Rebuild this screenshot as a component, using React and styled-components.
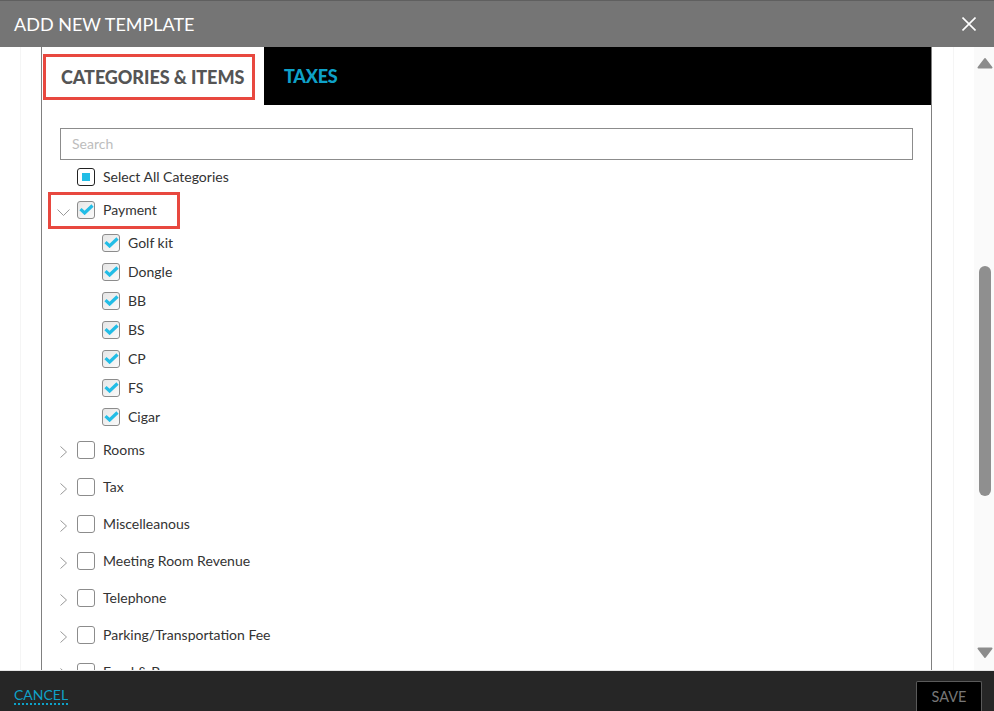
import React from "react";
import styled, { createGlobalStyle } from "styled-components";

const Global = createGlobalStyle`
  html, body { margin: 0; padding: 0; height: 100%; background: #fff; overflow: hidden; }
  #root { height: 100%; }
  * { box-sizing: border-box; }
`;

const Page = styled.div`
  width: 994px; height: 711px; display: flex; flex-direction: column;
  font-family: Lato, "Open Sans", sans-serif; color: #333; overflow: hidden;
`;
const Header = styled.header`
  height: 47px; flex: none; background: #757575; border-top: 1px solid #5f5f5f;
  display: flex; align-items: center; justify-content: space-between; padding: 0 18px 0 14px;
`;
const Title = styled.h1`
  margin: 0; font-size: 18px; font-weight: 400; color: #fff; line-height: 46px; letter-spacing: 0;
`;
const Main = styled.div`
  flex: 1; min-height: 0; display: flex; background: #fff;
`;
const LeftGutter = styled.div`
  width: 41px; flex: none; padding-left: 20px;
  &::before { content: ""; display: block; width: 1px; height: 100%; background: #f5f5f5; }
`;
const Panel = styled.section`
  width: 891px; flex: none; border-left: 1px solid #808080; border-right: 1px solid #808080;
  overflow: hidden;
`;
const Tabs = styled.div`
  height: 58px; background: #000; display: flex;
`;
const ActiveTab = styled.div`
  width: 222px; background: #fff; padding: 7px 9px 5px 1px;
`;
const TabMark = styled.div`
  height: 46px; border: 3px solid #e8483f; padding-left: 15px;
  font-size: 18px; font-weight: 900; line-height: 40px; color: #555; letter-spacing: -0.07px; white-space: nowrap;
`;
const Tab = styled.div`
  padding-left: 20px; font-size: 18px; font-weight: 900; line-height: 58px; color: #0ea1c8; letter-spacing: -0.25px;
`;
const Body = styled.div`
  padding: 23px 18px 0;
`;
const Search = styled.input`
  display: block; width: 853px; height: 32px; border: 1px solid #8c8c8c; border-radius: 0; outline: none;
  padding: 0 11px 2px; font: 400 14px Lato, sans-serif; background: #fff;
  &::placeholder { color: #bdbdbd; opacity: 1; }
`;
const Row = styled.div`
  position: relative; display: flex; align-items: center; height: ${p => p.$h}px;
  padding-left: ${p => p.$indent}px; font-size: 14px; color: #333;
  margin-top: ${p => p.$mt || 0}px;
`;
const Arrow = styled.svg`
  position: absolute; left: -3px; top: 50%; margin-top: -8px; width: 14px; height: 16px;
  fill: none; stroke: #999; stroke-width: 1;
`;
const Box = styled.span`
  width: 18px; height: 18px; flex: none; margin-right: 8px; border-radius: 3px;
  background: ${p => p.$checked ? "linear-gradient(135deg, #e6e6e6, #fafafa)" : "#fff"};
  border: 1px solid ${p => p.$dark ? "#222" : "#8c8c8c"};
  display: flex; align-items: center; justify-content: center;
`;
const Square = styled.span`
  width: 8px; height: 8px; background: #22bde6;
`;
const Check = styled.svg`
  width: 15px; height: 11px; fill: none; stroke: #22bde6; stroke-width: 3.2;
`;
const Highlight = styled.div`
  position: absolute; left: -12px; top: -1px; width: 132px; height: 37px; border: 3px solid #e8483f;
`;
const Scroller = styled.aside`
  flex: 1; display: flex; background: #fff;
`;
const ScrollGap = styled.div`
  width: 42px; flex: none; padding-left: 21px;
  &::before { content: ""; display: block; width: 1px; height: 100%; background: #f5f5f5; }
`;
const Track = styled.div`
  flex: 1; background: #fafafa; display: flex; flex-direction: column; align-items: center; padding: 10px 0 11px 2px;
`;
const Thumb = styled.div`
  width: 12px; height: 230px; border-radius: 6px; background: #8f8f8f; margin-top: 197px;
`;
const ArrowGlyph = styled.svg`
  width: 16px; height: 12px; fill: #8c8c8c; stroke: #8c8c8c; stroke-width: 2; stroke-linejoin: round; flex: none;
`;
const Spacer = styled.div` flex: 1; `;
const Footer = styled.footer`
  height: 41px; flex: none; background: #262626; border-top: 1px solid #e5e5e5;
  display: flex; justify-content: space-between; padding: 0 12px 0 14px;
`;
const Cancel = styled.a`
  align-self: center; margin-top: 8px; font-size: 14px; line-height: 17px; color: #0ea1c8;
  border-bottom: 2px dotted #0ea1c8;
`;
const Save = styled.button`
  width: 66px; height: 32px; margin-top: 10px; padding: 0 0 2px; background: #000; border: 1px solid #5a5a5a; border-bottom: none;
  border-radius: 2px 2px 0 0; color: #777; font: 400 14.5px Lato, sans-serif;
`;

const CheckMark = () => (
  <Check viewBox="0 0 15 11"><path d="M1.5 5.2 L5.6 9 L13.5 1.5" /></Check>
);
const Chevron = ({ open }) => (
  <Arrow viewBox="0 0 14 16">
    <path d={open ? "M0.5 7.5 L6.5 13.5 L12.5 7.5" : "M3.5 4.5 L9.5 10 L3.5 15.5"} />
  </Arrow>
);

const items = ["Golf kit", "Dongle", "BB", "BS", "CP", "FS", "Cigar"];
const cats = ["Rooms", "Tax", "Miscelleanous", "Meeting Room Revenue", "Telephone", "Parking/Transportation Fee", "Food & Beverage"];

export default function App() {
  return (
    <Page>
      <Global />
      <Header>
        <Title>ADD NEW TEMPLATE</Title>
        <svg width="14" height="14" viewBox="0 0 14 14" stroke="#fff" strokeWidth="1.6" fill="none">
          <path d="M0.5 0.5 L13.5 13.5 M13.5 0.5 L0.5 13.5" />
        </svg>
      </Header>
      <Main>
        <LeftGutter />
        <Panel>
          <Tabs>
            <ActiveTab><TabMark>CATEGORIES &amp; ITEMS</TabMark></ActiveTab>
            <Tab>TAXES</Tab>
          </Tabs>
          <Body>
            <Search placeholder="Search" readOnly />
            <Row $h={33} $indent={17}>
              <Box $dark><Square /></Box>Select All Categories
            </Row>
            <Row $h={33} $indent={17}>
              <Chevron open />
              <Box $checked><CheckMark /></Box>Payment
              <Highlight />
            </Row>
            {items.map((t, i) => (
              <Row key={t} $h={29} $indent={42} $mt={i === 0 ? 2 : 0}>
                <Box $checked><CheckMark /></Box>{t}
              </Row>
            ))}
            {cats.map(t => (
              <Row key={t} $h={37} $indent={17}>
                <Chevron />
                <Box />{t}
              </Row>
            ))}
          </Body>
        </Panel>
        <Scroller>
          <ScrollGap />
          <Track>
            <ArrowGlyph viewBox="0 0 16 12"><path d="M8 2 L14.5 10.5 L1.5 10.5 Z" /></ArrowGlyph>
            <Thumb />
            <Spacer />
            <ArrowGlyph viewBox="0 0 16 12"><path d="M1.5 1.5 L14.5 1.5 L8 10 Z" /></ArrowGlyph>
          </Track>
        </Scroller>
      </Main>
      <Footer>
        <Cancel>CANCEL</Cancel>
        <Save>SAVE</Save>
      </Footer>
    </Page>
  );
}
